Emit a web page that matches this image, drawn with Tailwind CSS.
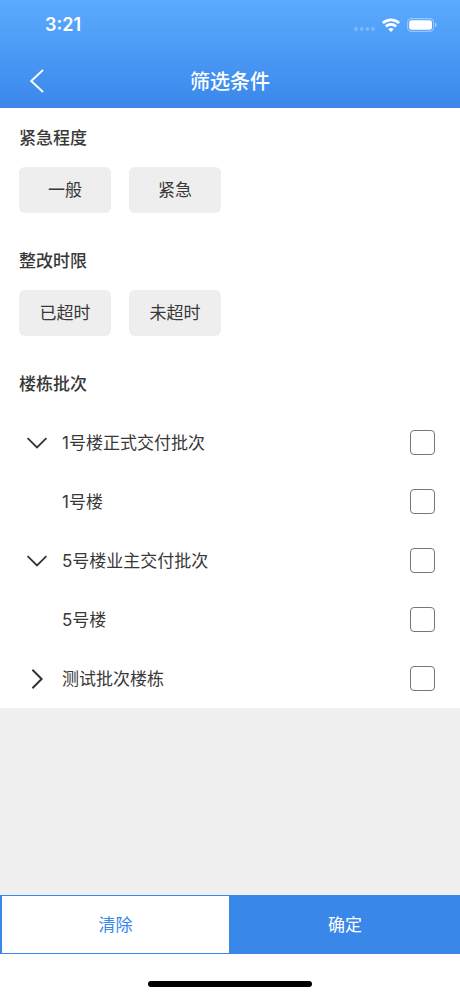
<!DOCTYPE html>
<html lang="zh-CN">
<head>
<meta charset="utf-8">
<meta name="viewport" content="width=device-width, initial-scale=1">
<title>筛选条件</title>
<script src="https://cdn.jsdelivr.net/npm/@tailwindcss/browser@4"></script>
</head>
<body class="flex min-h-screen flex-col bg-[#f0f0f0] font-['Inter','Noto_Sans_CJK_SC',sans-serif] text-[17px] leading-7 text-[#383838]">
  <header class="bg-linear-to-b from-[#5aabff] to-[#3a87ea] text-white">
    <div class="flex h-[54px] items-center justify-between pb-1 pl-[45px] pr-[23px]">
      <span class="text-[18px] font-semibold">3:21</span>
      <div class="flex items-center gap-[7px]">
        <svg class="mt-2 h-1 w-[21px]" viewBox="0 0 21 4" fill="#fff" fill-opacity=".25" aria-hidden="true"><circle cx="2" cy="2" r="1.9"/><circle cx="7.7" cy="2" r="1.9"/><circle cx="13.3" cy="2" r="1.9"/><circle cx="19" cy="2" r="1.9"/></svg>
        <svg class="h-[14px] w-[18px]" viewBox="0 0 18 14" fill="none" stroke="#fff" stroke-width="2.7" aria-hidden="true"><path d="M.9 5.1a11.6 11.6 0 0 1 16.2 0"/><path d="M3.9 8.5a7.3 7.3 0 0 1 10.2 0"/><path d="M9 13.9l-2.6-2.6a3.7 3.7 0 0 1 5.2 0z" fill="#fff" stroke="none"/></svg>
        <svg class="h-[14px] w-[30px]" viewBox="0 0 30 14" aria-hidden="true"><rect x=".6" y=".6" width="26" height="12.8" rx="3.8" fill="none" stroke="#fff" stroke-opacity=".4" stroke-width="1.1"/><rect x="2.2" y="2.2" width="22.8" height="9.6" rx="2.4" fill="#fff"/><path d="M28.1 4.8v4.4c1-.3 1.5-1.2 1.5-2.2s-.5-1.9-1.5-2.2z" fill="#fff" fill-opacity=".5"/></svg>
      </div>
    </div>
    <div class="grid h-[54px] grid-cols-[74px_1fr_74px] items-center">
      <button type="button" aria-label="返回" class="flex h-full items-center justify-center">
        <svg class="h-6 w-4" viewBox="0 0 16 24" fill="none" stroke="#fff" stroke-width="1.9" aria-hidden="true"><path d="M14 1L2.2 12 14 23"/></svg>
      </button>
      <h1 class="pt-0.5 text-center text-[20px] font-medium">筛选条件</h1>
    </div>
  </header>

  <main class="bg-white pt-4">
    <section class="px-[19px] pb-[34px]">
      <h2 class="mb-[15px] font-medium">紧急程度</h2>
      <div class="flex gap-[18px]">
        <button type="button" class="h-[46px] w-[92px] rounded-md bg-[#eeeeee]">一般</button>
        <button type="button" class="h-[46px] w-[92px] rounded-md bg-[#eeeeee]">紧急</button>
      </div>
    </section>
    <section class="px-[19px] pb-[34px]">
      <h2 class="mb-[15px] font-medium">整改时限</h2>
      <div class="flex gap-[18px]">
        <button type="button" class="h-[46px] w-[92px] rounded-md bg-[#eeeeee]">已超时</button>
        <button type="button" class="h-[46px] w-[92px] rounded-md bg-[#eeeeee]">未超时</button>
      </div>
    </section>
    <section>
      <h2 class="mb-[15px] px-[19px] font-medium">楼栋批次</h2>
      <ul>
        <li class="flex h-[59px] items-center pl-[26px] pr-[25px]">
          <button type="button" aria-label="收起" aria-expanded="true" class="mr-[14px]"><svg class="h-[22px] w-[22px]" viewBox="0 0 22 22" fill="none" stroke="#333" stroke-width="1.8" aria-hidden="true"><path d="M1.6 6.2L11 15.4l9.4-9.2"/></svg></button>
          <label for="batch1" class="flex-1">1号楼正式交付批次</label>
          <input id="batch1" type="checkbox" class="size-[25px] appearance-none rounded-sm border border-[#777777] bg-white checked:bg-[#3a87ea]">
        </li>
        <li class="flex h-[59px] items-center pl-[62px] pr-[25px]">
          <label for="building1" class="flex-1">1号楼</label>
          <input id="building1" type="checkbox" class="size-[25px] appearance-none rounded-sm border border-[#777777] bg-white checked:bg-[#3a87ea]">
        </li>
        <li class="flex h-[59px] items-center pl-[26px] pr-[25px]">
          <button type="button" aria-label="收起" aria-expanded="true" class="mr-[14px]"><svg class="h-[22px] w-[22px]" viewBox="0 0 22 22" fill="none" stroke="#333" stroke-width="1.8" aria-hidden="true"><path d="M1.6 6.2L11 15.4l9.4-9.2"/></svg></button>
          <label for="batch5" class="flex-1">5号楼业主交付批次</label>
          <input id="batch5" type="checkbox" class="size-[25px] appearance-none rounded-sm border border-[#777777] bg-white checked:bg-[#3a87ea]">
        </li>
        <li class="flex h-[59px] items-center pl-[62px] pr-[25px]">
          <label for="building5" class="flex-1">5号楼</label>
          <input id="building5" type="checkbox" class="size-[25px] appearance-none rounded-sm border border-[#777777] bg-white checked:bg-[#3a87ea]">
        </li>
        <li class="flex h-[59px] items-center pl-[26px] pr-[25px]">
          <button type="button" aria-label="展开" aria-expanded="false" class="mr-[14px]"><svg class="h-[22px] w-[22px]" viewBox="0 0 22 22" fill="none" stroke="#333" stroke-width="2" aria-hidden="true"><path d="M6.4 1.8L15.6 11l-9.2 9.2"/></svg></button>
          <label for="test" class="flex-1">测试批次楼栋</label>
          <input id="test" type="checkbox" class="size-[25px] appearance-none rounded-sm border border-[#777777] bg-white checked:bg-[#3a87ea]">
        </li>
      </ul>
    </section>
  </main>

  <footer class="mt-auto bg-white">
    <div class="grid h-[59px] grid-cols-2">
      <button type="button" class="border-y border-l-2 border-r border-[#3a87ea] bg-white text-[#3a87ea]">清除</button>
      <button type="button" class="bg-[#3a87ea] text-white">确定</button>
    </div>
    <div class="flex h-[42px] items-end justify-center pb-[9px]">
      <div class="h-[6px] w-[164px] rounded-full bg-black"></div>
    </div>
  </footer>
</body>
</html>
